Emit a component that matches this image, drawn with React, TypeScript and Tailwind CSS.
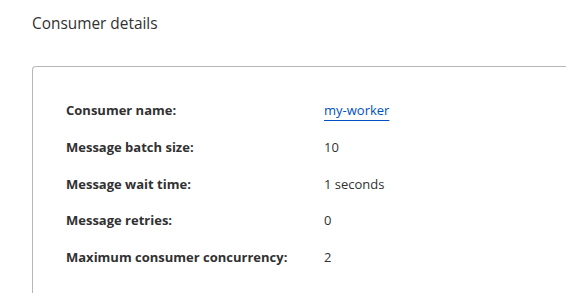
import React from "react";

const rows: { label: string; value: string; link?: boolean }[] = [
  { label: "Consumer name:", value: "my-worker", link: true },
  { label: "Message batch size:", value: "10" },
  { label: "Message wait time:", value: "1 seconds" },
  { label: "Message retries:", value: "0" },
  { label: "Maximum consumer concurrency:", value: "2" },
];

export default function App() {
  return (
    <div className="h-[293px] bg-white font-['Open_Sans',sans-serif] text-[#313131] overflow-hidden">
      <div className="pl-8 pt-[13px]">
        <h2 className="text-[15.4px] leading-[22px] font-medium">Consumer details</h2>
        <div className="mt-[31px] -mr-4 h-[240px] rounded-tl border-l border-t border-[#b7b7b7] pl-[33px] pt-[33px]">
          <dl className="flex flex-col gap-[16.75px] text-[13px] leading-[20px]">
            {rows.map((r) => (
              <div key={r.label} className="flex">
                <dt className="w-[258px] font-bold">{r.label}</dt>
                <dd>
                  {r.link ? (
                    <a
                      href="#"
                      className="text-[#0051c3] underline underline-offset-[5px] decoration-[1px]"
                    >
                      {r.value}
                    </a>
                  ) : (
                    r.value
                  )}
                </dd>
              </div>
            ))}
          </dl>
        </div>
      </div>
    </div>
  );
}
